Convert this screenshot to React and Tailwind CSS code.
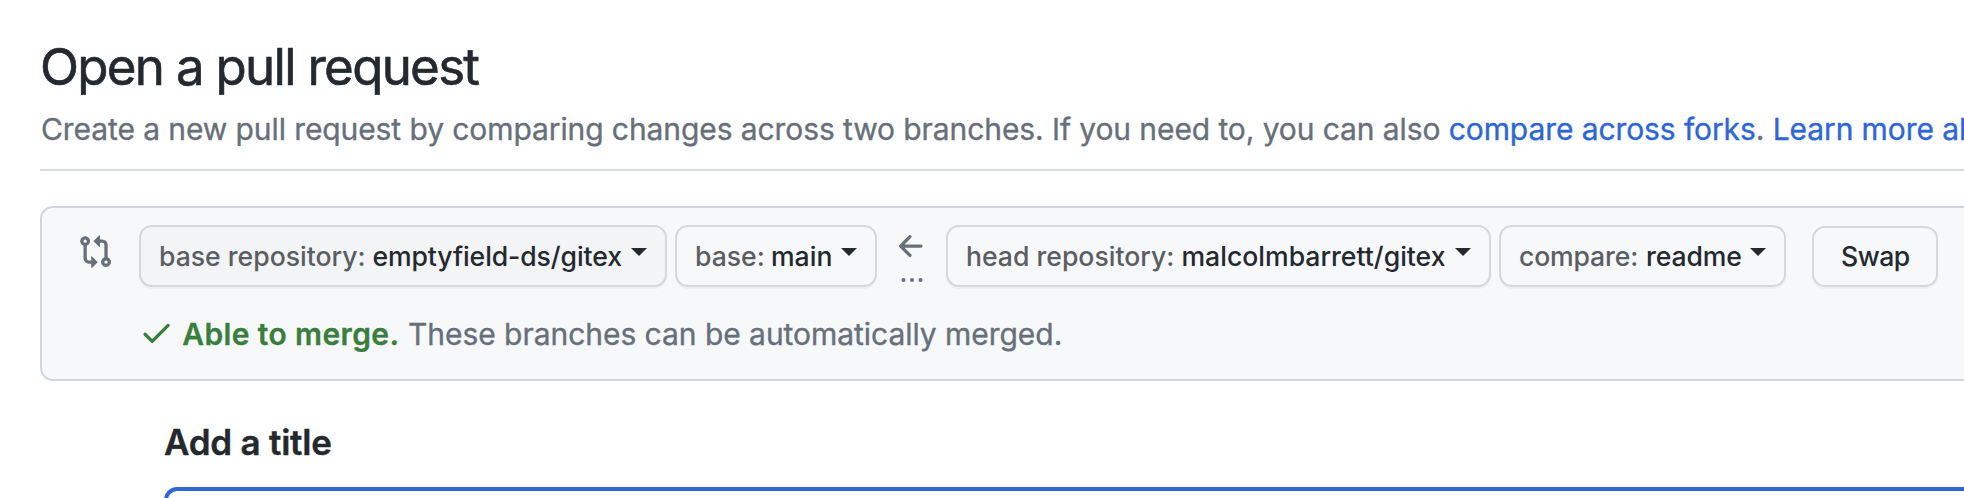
function Icon({ d, className }) {
  return (
    <svg viewBox="0 0 16 16" fill="currentColor" className={`shrink-0 size-[35.2px] ${className}`}>
      <path fillRule="evenodd" d={d} />
    </svg>
  );
}

const COMPARE =
  "M9.573.677A.25.25 0 0 1 10 .854V2.5h1A2.5 2.5 0 0 1 13.5 5v5.628a2.251 2.251 0 1 1-1.5 0V5a1 1 0 0 0-1-1h-1v1.646a.25.25 0 0 1-.427.177L7.177 3.427a.25.25 0 0 1 0-.354zM6 12v-1.646a.25.25 0 0 1 .427-.177l2.396 2.396a.25.25 0 0 1 0 .354l-2.396 2.396A.25.25 0 0 1 6 15.146V13.5H5A2.5 2.5 0 0 1 2.5 11V5.372a2.25 2.25 0 1 1 1.5 0V11a1 1 0 0 0 1 1zM4 3.25a.75.75 0 1 0-1.5 0 .75.75 0 0 0 1.5 0m8.75 10.25a.75.75 0 1 0 0-1.5.75.75 0 0 0 0 1.5";
const ARROW =
  "M7.78 12.53a.75.75 0 0 1-1.06 0L2.47 8.28a.75.75 0 0 1 0-1.06l4.25-4.25a.751.751 0 0 1 1.042.018.751.751 0 0 1 .018 1.042L4.81 7h7.44a.75.75 0 0 1 0 1.5H4.81l2.97 2.97a.75.75 0 0 1 0 1.06Z";
const CHECK =
  "M13.78 4.22a.75.75 0 0 1 0 1.06l-7.25 7.25a.75.75 0 0 1-1.06 0L2.22 9.28a.751.751 0 0 1 .018-1.042.751.751 0 0 1 1.042-.018L6 10.94l6.72-6.72a.75.75 0 0 1 1.06 0Z";

const BUTTON =
  "flex shrink-0 border-2 rounded-[13px] border-[#d5d7da] text-[26.6px] font-medium text-[#24292f] whitespace-nowrap shadow-[0_2px_0_rgba(27,31,36,0.04)]";

function Select({ label, value, className, labelClass, valueClass }) {
  return (
    <button className={`${BUTTON} h-[62px] pl-[18px] leading-[58px] ${className}`}>
      <span className={`text-left text-[#5a5e63] ${labelClass}`}>{label}</span>
      <span className={`text-left ${valueClass}`}>{value}</span>
      <svg viewBox="0 0 16 8" className="mt-[21px] h-2 w-4 shrink-0" fill="currentColor">
        <path d="M0 0h16L8 8z" />
      </svg>
    </button>
  );
}

export default function App() {
  return (
    <div className="h-[498px] w-[1964px] overflow-hidden bg-white pl-10 font-['Inter',sans-serif] text-[#24292f]">
      <header className="flex h-[171px] flex-col border-b-2 border-[#d8dde2] pt-[36px]">
        <h1 className="h-[62px] text-[51px] leading-[62px] font-normal tracking-[-1.7px] whitespace-nowrap [-webkit-text-stroke:0.6px]">Open a pull request</h1>
        <p className="mt-[11px] pl-px text-[30px] leading-[40px] tracking-[-0.09px] whitespace-nowrap text-[#67707a] [-webkit-text-stroke:0.35px]">
          Create a new pull request by comparing changes across two branches. If you need to, you can also{" "}
          <a className="text-[#2e66d6]">compare across forks</a>. <a className="text-[#2e66d6]">Learn more about diff comparisons</a>
        </p>
      </header>

      <section className="mt-[35px] h-[175px] w-[1960px] rounded-[13px] border-2 border-[#d0d6de] bg-[#f6f8fa] pt-[17px] text-[#67707a]">
        <div className="flex h-[62px] items-start pl-9">
          <Icon d={COMPARE} className="mt-[9px]" />
          <Select label="base repository:" value="emptyfield-ds/gitex" className="ml-[25.8px] w-[528px] bg-[#f3f4f6]" labelClass="w-[213.5px]" valueClass="w-[258.5px] tracking-[-0.1px]" />
          <Select label="base:" value="main" className="ml-2 w-[202px]" labelClass="w-[76px]" valueClass="w-[70px]" />
          <div className="ml-[17px] flex w-[52px] flex-col">
            <Icon d={ARROW} className="mt-[4px]" />
            <svg viewBox="0 0 21 4" className="mt-[14px] ml-[7px] h-1 w-[22px]" fill="currentColor">
              <circle cx="2" cy="2" r="2" />
              <circle cx="10.5" cy="2" r="2" />
              <circle cx="19" cy="2" r="2" />
            </svg>
          </div>
          <Select label="head repository:" value="malcolmbarrett/gitex" className="w-[545px]" labelClass="w-[215.5px]" valueClass="w-[273.5px]" />
          <Select label="compare:" value="readme" className="ml-2 w-[287px]" labelClass="w-[127px] tracking-[-0.15px]" valueClass="w-[104px] tracking-[-0.1px]" />
          <button className={`${BUTTON} mt-px ml-[26px] h-[61px] w-[126px] pl-[27px] leading-[56px] tracking-[-0.5px]`}>Swap</button>
        </div>
        <div className="mt-[27px] flex h-[40px] items-start pl-[97px] text-[30px] leading-[40px] whitespace-nowrap">
          <Icon d={CHECK} className="mt-[1px] text-[#3a7e3d]" />
          <strong className="ml-[8px] w-[225.8px] font-semibold tracking-[0.38px] text-[#3a7e3d] [-webkit-text-stroke:0.3px]">Able to merge.</strong>
          <span className="tracking-[-0.04px] [-webkit-text-stroke:0.35px]">These branches can be automatically merged.</span>
        </div>
      </section>

      <main className="pt-[39px] pl-[124px]">
        <h2 className="h-[44px] text-[35px] leading-[44px] font-semibold tracking-[-0.22px] [-webkit-text-stroke:0.4px]">Add a title</h2>
        <input aria-label="Title" className="mt-[23px] block h-[70px] w-[1900px] rounded-[13px] border-4 border-[#2e66d6] bg-white" />
      </main>
    </div>
  );
}
